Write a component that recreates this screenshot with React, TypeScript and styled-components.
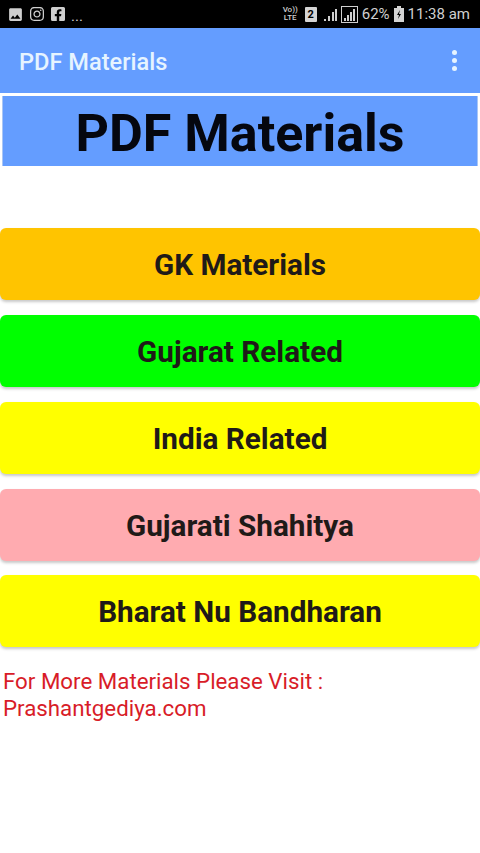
import React from 'react';
import styled, { createGlobalStyle } from 'styled-components';
import { FaFacebookSquare, FaInstagram } from 'react-icons/fa';
import { MdImage } from 'react-icons/md';

const GlobalStyle = createGlobalStyle`
  html, body {
    margin: 0;
    padding: 0;
    background: #ffffff;
    font-family: Roboto, "Liberation Sans", sans-serif;
  }
`;

const Screen = styled.div`
  width: 480px;
  height: 853px;
  overflow: hidden;
  display: flex;
  flex-direction: column;
  background: #ffffff;
`;

const StatusBar = styled.div`
  height: 28px;
  flex-shrink: 0;
  background: #000000;
  color: #cfcfcf;
  display: flex;
  align-items: center;
  justify-content: space-between;
  padding: 0 10px 0 7px;
`;

const StatusGroup = styled.div`
  display: flex;
  align-items: center;
  gap: 5px;
`;

const RightGroup = styled.div`
  display: flex;
  align-items: center;
  gap: 4px;
`;

const Dots = styled.span`
  font-size: 15px;
  line-height: 1;
  padding-top: 4px;
`;

const StatusText = styled.span`
  font-size: 15px;
  white-space: nowrap;
`;

const Volte = styled.span`
  font-size: 8px;
  line-height: 8px;
  text-align: center;
  font-weight: 500;
`;

const SimBadge = styled.span`
  width: 12px;
  height: 15px;
  margin: 0 3px;
  background: #d4d4d4;
  color: #000000;
  font-size: 11px;
  font-weight: 700;
  text-align: center;
  line-height: 15px;
  border-radius: 1px;
`;

const AppBar = styled.header`
  height: 65px;
  flex-shrink: 0;
  background: #649dff;
  display: flex;
  align-items: center;
  justify-content: space-between;
  padding: 2px 19px 0;
  box-sizing: border-box;
  color: #e6f4ff;
`;

const AppTitle = styled.h1`
  margin: 0;
  font-size: 23.6px;
  font-weight: 500;
`;

const MenuDots = styled.div`
  display: flex;
  flex-direction: column;
  gap: 3px;
  margin: -3px 4px 0 0;
`;

const MenuDot = styled.span`
  width: 5px;
  height: 5px;
  border-radius: 50%;
  background: #e6f4ff;
`;

const Banner = styled.div`
  margin: 3px 2px 0 2px;
  height: 70px;
  box-sizing: border-box;
  border-left: 1px solid #a9c6f5;
  border-right: 1px solid #a9c6f5;
  background: #649dff;
  color: #05070f;
  font-size: 52px;
  font-weight: 700;
  display: flex;
  align-items: center;
  justify-content: center;
  padding-top: 5px;
`;

const ButtonList = styled.div`
  display: flex;
  flex-direction: column;
  gap: 14.75px;
  margin-top: 62.3px;
`;

const MaterialButton = styled.button<{ $bg: string }>`
  height: 72px;
  border: none;
  border-radius: 6px;
  background: ${(props) => props.$bg};
  color: #1f1a18;
  font-family: Roboto, "Liberation Sans", sans-serif;
  font-size: 29.7px;
  font-weight: 700;
  box-shadow: 0 2px 3px rgba(0, 0, 0, 0.22);
  padding: 1px 0 0;
`;

const VisitNote = styled.p`
  margin: 20.7px 0 0 3px;
  color: #d81c28;
  font-size: 22.3px;
  line-height: 27px;
`;

const buttons = [
  { label: 'GK Materials', bg: '#ffc400' },
  { label: 'Gujarat Related', bg: '#00ff00' },
  { label: 'India Related', bg: '#ffff00' },
  { label: 'Gujarati Shahitya', bg: '#ffabb0' },
  { label: 'Bharat Nu Bandharan', bg: '#ffff00' },
];

const SignalIcon = () => (
  <svg width="13" height="17" viewBox="0 0 13 17" fill="#cfcfcf">
    <rect x="0" y="13" width="2" height="2" />
    <rect x="4" y="10" width="2" height="5" />
    <rect x="8" y="6" width="2" height="9" />
    <rect x="11" y="3" width="2" height="12" />
  </svg>
);

const BoxedSignalIcon = () => (
  <svg width="17" height="17" viewBox="0 0 17 17" fill="#cfcfcf">
    <rect x="0.5" y="0.5" width="16" height="16" fill="none" stroke="#cfcfcf" />
    <rect x="3" y="12" width="2" height="3" />
    <rect x="6" y="9" width="2" height="6" />
    <rect x="9" y="6" width="2" height="9" />
    <rect x="12" y="3" width="2" height="12" />
  </svg>
);

const BatteryIcon = () => (
  <svg width="10" height="16" viewBox="0 0 10 16">
    <rect x="3" y="0" width="4" height="2" fill="#d4d4d4" />
    <rect x="0" y="2" width="10" height="14" fill="#d4d4d4" />
    <path d="M6 4 L3 9 H5 L4 13 L7 8 H5 Z" fill="#000" />
  </svg>
);

const App: React.FC = () => (
  <Screen>
    <GlobalStyle />
    <StatusBar>
      <StatusGroup>
        <MdImage size={17} />
        <FaInstagram size={16} />
        <FaFacebookSquare size={16} />
        <Dots>...</Dots>
      </StatusGroup>
      <RightGroup>
        <Volte>
          Vo))
          <br />
          LTE
        </Volte>
        <SimBadge>2</SimBadge>
        <SignalIcon />
        <BoxedSignalIcon />
        <StatusText>62%</StatusText>
        <BatteryIcon />
        <StatusText>11:38 am</StatusText>
      </RightGroup>
    </StatusBar>
    <AppBar>
      <AppTitle>PDF Materials</AppTitle>
      <MenuDots>
        <MenuDot />
        <MenuDot />
        <MenuDot />
      </MenuDots>
    </AppBar>
    <Banner>PDF Materials</Banner>
    <ButtonList>
      {buttons.map((button) => (
        <MaterialButton key={button.label} $bg={button.bg}>
          {button.label}
        </MaterialButton>
      ))}
    </ButtonList>
    <VisitNote>
      For More Materials Please Visit :
      <br />
      Prashantgediya.com
    </VisitNote>
  </Screen>
);

export default App;
